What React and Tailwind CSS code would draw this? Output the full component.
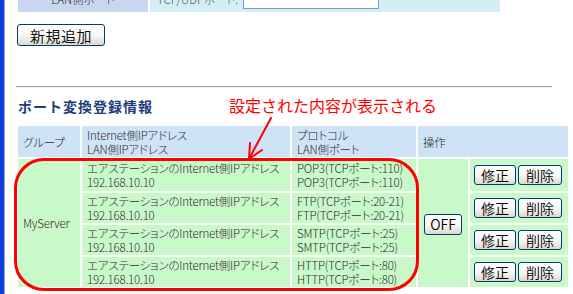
export default function App() {
  const protocols = [
    "POP3(TCPポート:110)",
    "FTP(TCPポート:20-21)",
    "SMTP(TCPポート:25)",
    "HTTP(TCPポート:80)",
  ];
  const btn =
    "flex items-center justify-center border border-[#003c74] rounded-[3px] bg-[linear-gradient(180deg,#ffffff_0%,#f6f6f2_55%,#dcd8cc_100%)] text-black text-[14px] leading-none [font-weight:350]";
  const green = "bg-[#c9f8c9]";
  const head = "bg-[#cfe3f7]";
  const rowClasses = ["row-start-2", "row-start-3", "row-start-4", "row-start-5"];
  return (
    <div className="relative flex w-[573px] h-[294px] overflow-hidden bg-white font-['Noto_Sans_CJK_JP',sans-serif] text-[#2e2e2e] [font-feature-settings:'palt']">
      <div className="w-[4px] shrink-0 bg-[#0b3cdc]" />
      <div className="w-[1px] shrink-0 bg-[#a9a9a9]" />
      <div className="flex flex-col pl-[11px]">
        {/* partially visible top row */}
        <div className="mt-[-12px] ml-[2px] grid grid-cols-[130px_350px] gap-[2px] h-[24px] text-[11.5px] leading-none font-light">
          <div className="bg-[#c8d7ef] flex items-center justify-center whitespace-nowrap">LAN側ポート</div>
          <div className="bg-[#d4eef5] flex items-center pl-[7px]">
            <span className="w-[86px] whitespace-nowrap text-[#555]">TCP/UDPポート:</span>
            <div className="self-start mt-[1px] w-[136px] h-[20px] bg-white border border-[#7f9db9]" />
          </div>
        </div>

        <div className={`${btn} mt-[12px] ml-[1px] w-[88px] h-[22px] text-[15px] tracking-[0.5px]`}>新規追加</div>

        <div className="mt-[40px] w-[536px] h-[2px] border-t border-[#aca899] border-b border-b-[#f2f2ee]" />

        <div className="mt-[10px] ml-[2px] text-[14px] leading-[16px] font-bold tracking-[1px] text-[#1f3d7a] [font-feature-settings:normal]">
          ポート変換登録情報
        </div>

        <div className="mt-[12px] ml-[2px] grid grid-cols-[62px_208px_124px_50px_98px] grid-rows-[31px_32px_30px_30px_30px] gap-[2px] text-[11.5px] leading-[14px] tracking-[-0.2px] font-light whitespace-nowrap">
          <div className={`${head} col-start-1 row-start-1 flex items-center pl-[5px]`}>グループ</div>
          <div className={`${head} col-start-2 row-start-1 flex flex-col justify-center pl-[5px]`}>
            <span>Internet側IPアドレス</span>
            <span>LAN側IPアドレス</span>
          </div>
          <div className={`${head} col-start-3 row-start-1 flex flex-col justify-center pl-[5px]`}>
            <span>プロトコル</span>
            <span>LAN側ポート</span>
          </div>
          <div className={`${head} col-start-4 col-span-2 row-start-1 flex items-center pl-[5px]`}>操作</div>

          <div className={`${green} col-start-1 row-start-2 row-span-4 flex items-center pl-[5px]`}>MyServer</div>
          <div className={`${green} col-start-4 row-start-2 row-span-4 flex items-center justify-center`}>
            <div className={`${btn} w-[38px] h-[21px] mt-[2px] tracking-normal`}>OFF</div>
          </div>

          {protocols.map((p, i) => (
            <div key={p} className="contents">
              <div className={`${green} col-start-2 ${rowClasses[i]} flex flex-col justify-center pl-[5px]`}>
                <span>エアステーションのInternet側IPアドレス</span>
                <span>192.168.10.10</span>
              </div>
              <div className={`${green} col-start-3 ${rowClasses[i]} flex flex-col justify-center pl-[5px]`}>
                <span>{p}</span>
                <span>{p}</span>
              </div>
              <div className={`${green} col-start-5 ${rowClasses[i]} flex items-center justify-center gap-[2px] pr-[2px] tracking-normal`}>
                <div className={`${btn} w-[42px] h-[20px]`}>修正</div>
                <div className={`${btn} w-[44px] h-[20px]`}>削除</div>
              </div>
            </div>
          ))}
        </div>
      </div>

      {/* annotation overlay */}
      <div className="absolute left-[229px] top-[95px] text-[16px] leading-[20px] text-[#ff0000] whitespace-nowrap [font-feature-settings:normal]">
        設定された内容が表示される
      </div>
      <svg className="absolute left-0 top-0" width="573" height="294" viewBox="0 0 573 294">
        <g stroke="#ff0000" strokeWidth="2" fill="none" strokeLinecap="round">
          <line x1="271" y1="118" x2="249" y2="159" />
          <line x1="249" y1="159" x2="262" y2="150" />
          <line x1="249" y1="159" x2="250" y2="143" />
        </g>
      </svg>
      <div className="absolute left-[14px] top-[158px] w-[405px] h-[133px] border-[3px] border-[#ff0000] rounded-[30px]" />
    </div>
  );
}
